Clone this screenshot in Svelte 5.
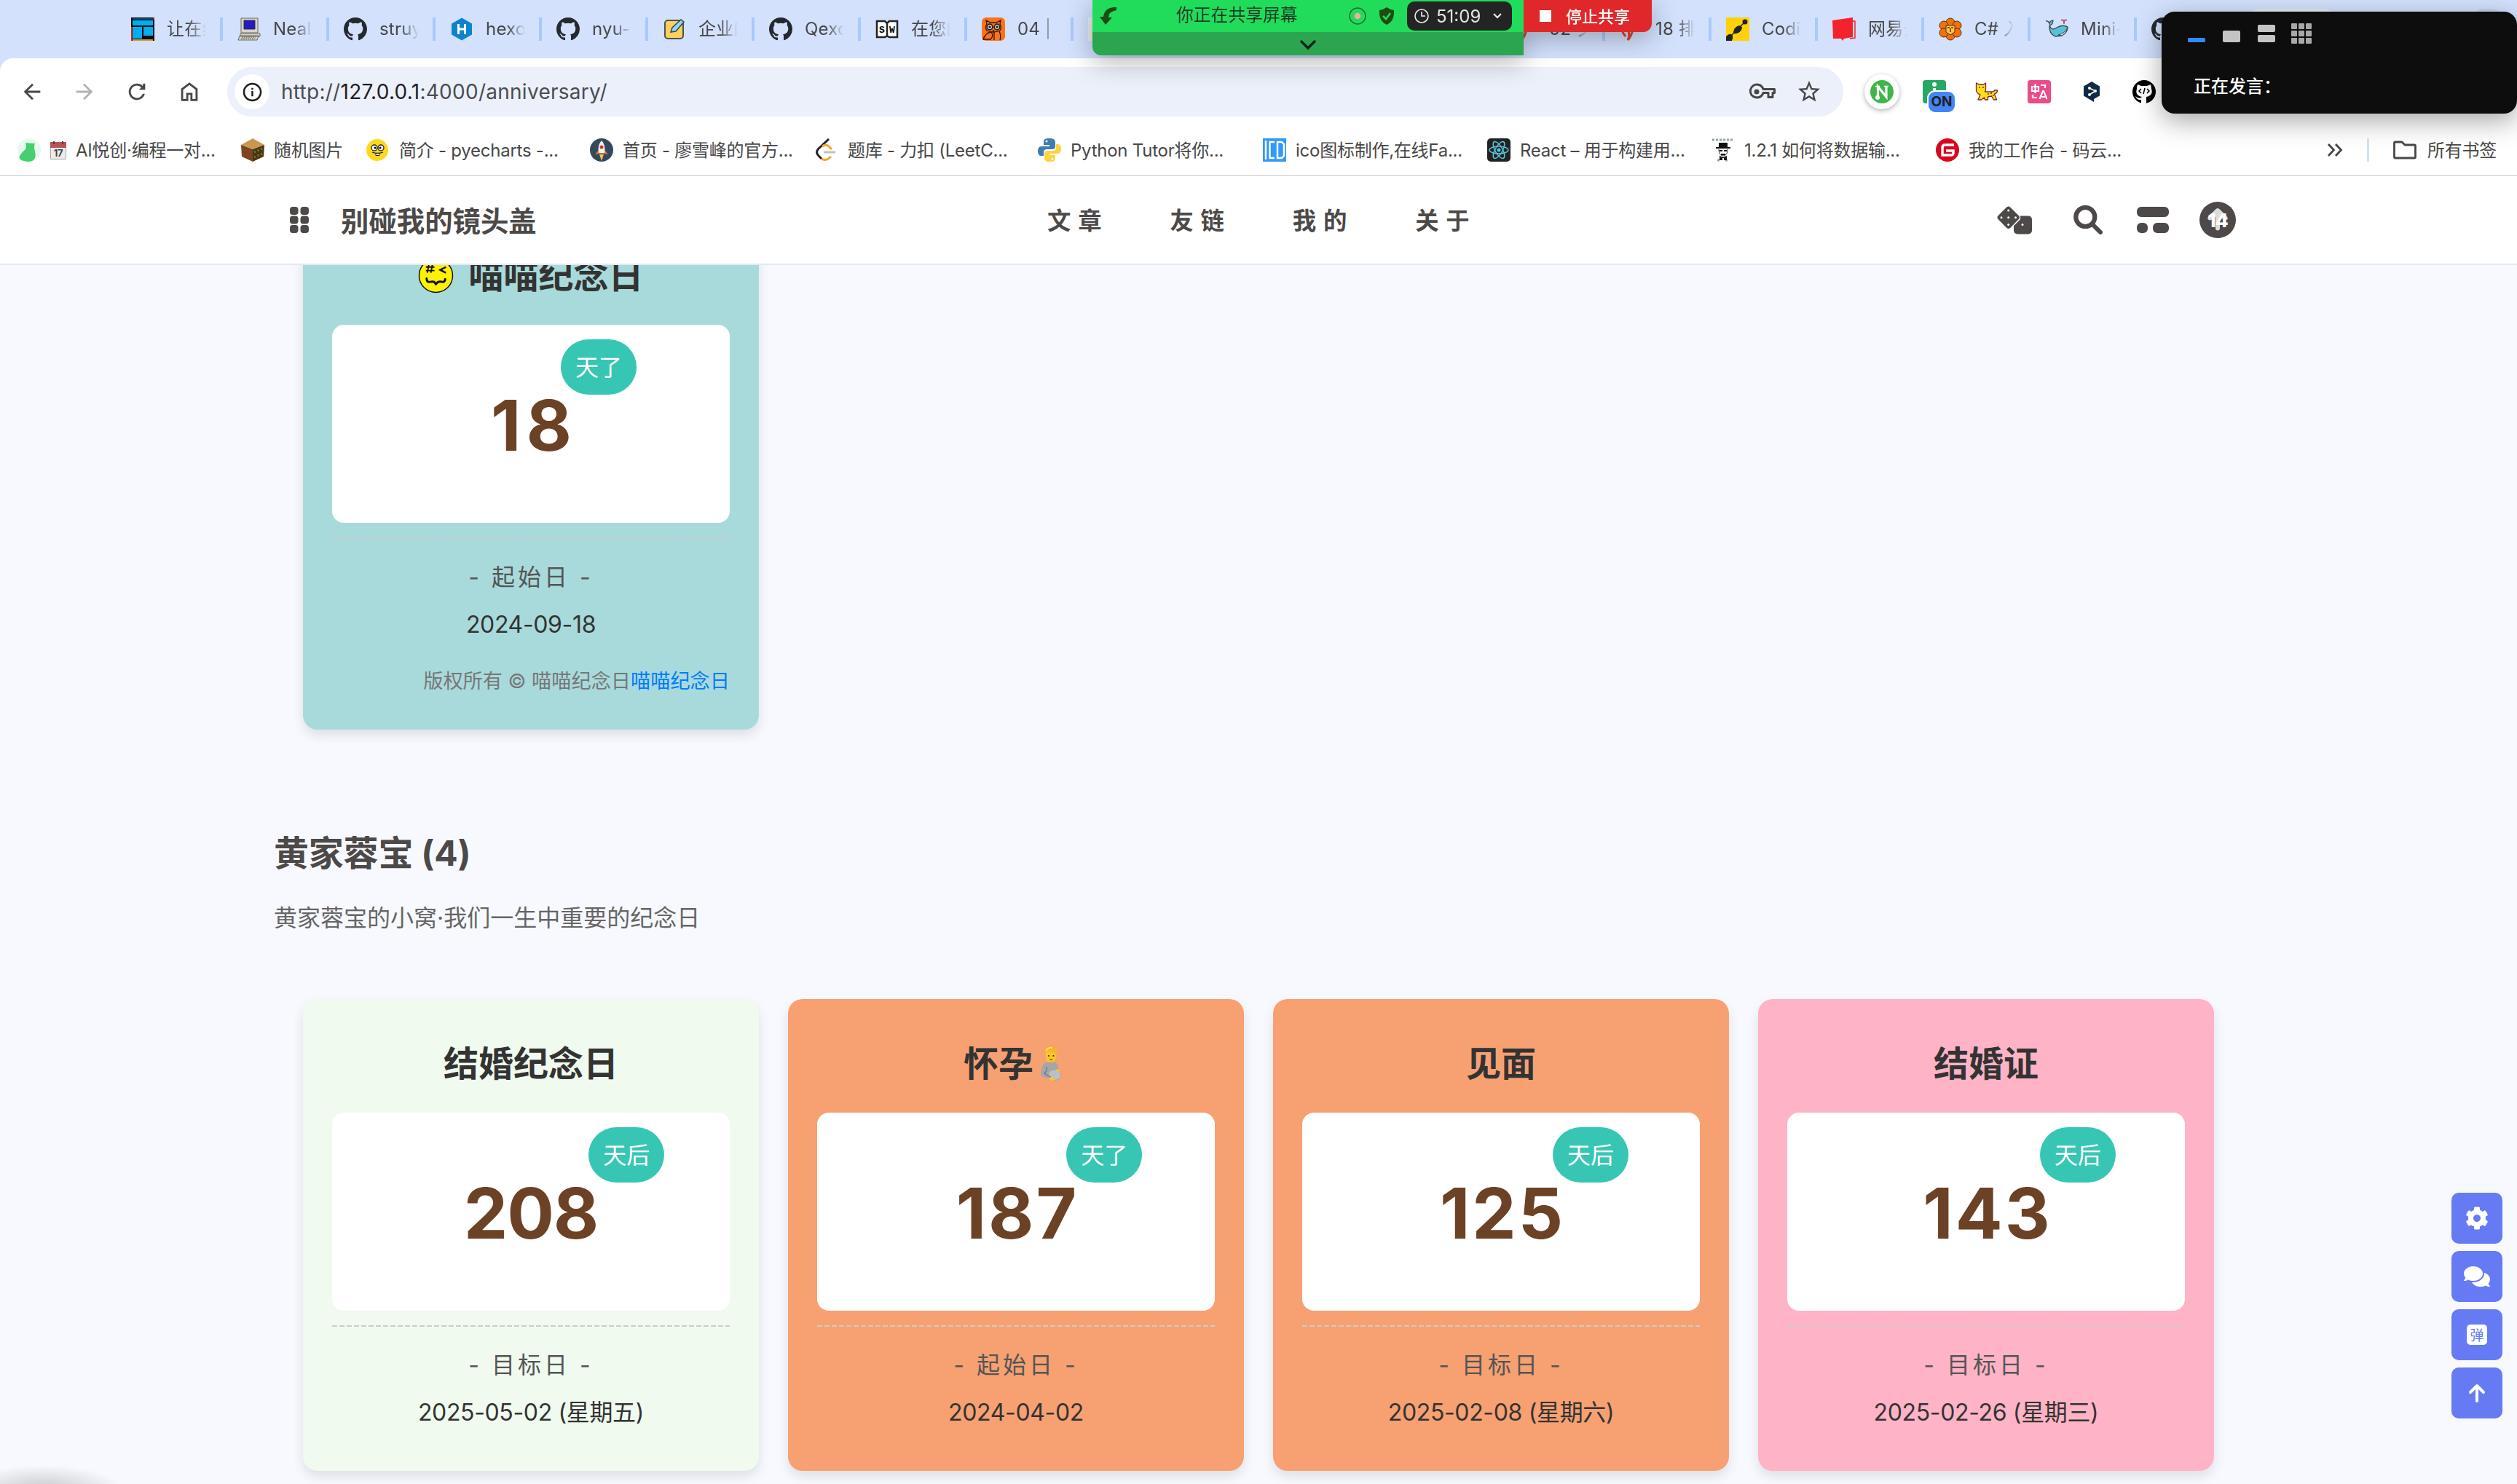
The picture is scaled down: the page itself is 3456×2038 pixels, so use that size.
<script>
  const tabs = [
    { icon: 'building', text: '让在线' },
    { icon: 'computer', text: 'Neal.' },
    { icon: 'github', text: 'struy' },
    { icon: 'hexo', text: 'hexo-' },
    { icon: 'github', text: 'nyu-' },
    { icon: 'note', text: '企业的' },
    { icon: 'github', text: 'Qexo' },
    { icon: 'book', text: '在您的' },
    { icon: 'owl', text: '04 | ' },
    { icon: 'blank', text: '' },
    { icon: 'none', text: '' },
    { icon: 'none', text: '' },
    { icon: 'none', text: '' },
    { icon: 'flame', text: '02 夕' },
    { icon: 'flame', text: '18 排序' },
    { icon: 'coding', text: 'Codin' },
    { icon: 'cube', text: '网易云' },
    { icon: 'lion', text: 'C# 入' },
    { icon: 'whale', text: 'Mini-' },
    { icon: 'github', text: '' }
  ];

  const bookmarks = [
    { icon: 'bird', text: 'AI悦创·编程一对...', calendar: true },
    { icon: 'shelf', text: '随机图片' },
    { icon: 'smile', text: '简介 - pyecharts -...' },
    { icon: 'rocket', text: '首页 - 廖雪峰的官方...' },
    { icon: 'leet', text: '题库 - 力扣 (LeetC...' },
    { icon: 'python', text: 'Python Tutor将你...' },
    { icon: 'ico', text: 'ico图标制作,在线Fa...' },
    { icon: 'react', text: 'React – 用于构建用...' },
    { icon: 'hat', text: '1.2.1 如何将数据输...' },
    { icon: 'gitee', text: '我的工作台 - 码云...' }
  ];

  const menu = ['文章', '友链', '我的', '关于'];

  const cards = [
    { title: '结婚纪念日', days: '208', unit: '天后', label: '- 目标日 -', date: '2025-05-02 (星期五)', tone: 'mint' },
    { title: '怀孕', days: '187', unit: '天了', label: '- 起始日 -', date: '2024-04-02', tone: 'orange', emoji: true, track: 'wide' },
    { title: '见面', days: '125', unit: '天后', label: '- 目标日 -', date: '2025-02-08 (星期六)', tone: 'orange', track: 'wide' },
    { title: '结婚证', days: '143', unit: '天后', label: '- 目标日 -', date: '2025-02-26 (星期三)', tone: 'pink', track: 'wide' }
  ];
</script>

{#snippet icon(name)}
  <svg class="ico" viewBox="0 0 32 32">
    {#if name === 'github'}
      <path transform="scale(2)" fill="#24292f" d="M8 0C3.58 0 0 3.58 0 8c0 3.54 2.29 6.53 5.47 7.59.4.07.55-.17.55-.38 0-.19-.01-.82-.01-1.49-2.01.37-2.53-.49-2.69-.94-.09-.23-.48-.94-.82-1.13-.28-.15-.68-.52-.01-.53.63-.01 1.08.58 1.23.82.72 1.21 1.87.87 2.33.66.07-.52.28-.87.51-1.07-1.78-.2-3.64-.89-3.64-3.95 0-.87.31-1.59.82-2.15-.08-.2-.36-1.02.08-2.12 0 0 .67-.21 2.2.82.64-.18 1.32-.27 2-.27s1.36.09 2 .27c1.53-1.04 2.2-.82 2.2-.82.44 1.1.16 1.92.08 2.12.51.56.82 1.27.82 2.15 0 3.07-1.87 3.75-3.65 3.95.29.25.54.73.54 1.48 0 1.07-.01 1.93-.01 2.2 0 .21.15.46.55.38A8.01 8.01 0 0 0 16 8c0-4.42-3.58-8-8-8z" />
    {:else if name === 'building'}
      <rect width="32" height="32" fill="#0a0a0a" />
      <path fill="#0b4a7d" d="M2 1h28v2H2z" /><path fill="#00aeef" d="M2 4h28v7H2zM2 13h13v16H2zM17 13h13v12H17z" />
      <path fill="#e02020" d="M0 13h1.500v19H0zM30.500 0H32v3h-1.500z" /><path fill="#d8962c" d="M2 30h28v2H2z" />
    {:else if name === 'computer'}
      <path fill="#d8d5c8" stroke="#6b6a63" d="M5 1h23v20H5zM4 22h27v4H4zM3 25h26l-2 6H1z" />
      <path fill="#2418c8" stroke="#333" d="M9 4h15v12H9z" /><path stroke="#555" stroke-dasharray="2 1" d="M6 27h19M5 29h19" />
    {:else if name === 'hexo'}
      <path fill="#0e83cd" d="M16 .5 30 8.500v15L16 31.500 2 23.500v-15z" /><path stroke="#fff" stroke-width="3" fill="none" d="M11.500 9v14M20.500 9v14M11.500 16h9" />
    {:else if name === 'note'}
      <rect x="3" y="4" width="25" height="25" rx="4" fill="#ffcf5c" stroke="#4a5258" stroke-width="2" />
      <path fill="#8ed8f5" stroke="#2d4a5a" stroke-width="1.500" d="m11 20 2-6L25 3l4 3-11 13z" />
    {:else if name === 'book'}
      <path fill="#fff" stroke="#222" stroke-width="2.500" d="M2 5h11l3 3 3-3h11v22H19l-3-1.500L13 27H2zM16 8v18" />
      <text x="9" y="21" class="mono">S</text><text x="23" y="21" class="mono">W</text>
    {:else if name === 'owl'}
      <rect width="32" height="32" rx="6" fill="#f9731a" />
      <g fill="none" stroke="#3a1404" stroke-width="1.300"><path d="M6 4l1 5q-3 5 0 9 9 4 18 0 3-4 0-9l1-5-6 3h-8zM13 20q-8 1-11 10h10q5-5 1-10M24 19q3 6 1 12M17 20v11" /></g>
      <g fill="#f2ead8" stroke="#222" stroke-width="1.800"><circle cx="11" cy="13" r="3.800" /><circle cx="21" cy="13" r="3.800" /></g>
      <circle cx="11" cy="13" r="1.800" fill="#222" /><circle cx="21" cy="13" r="1.800" fill="#222" /><path d="m14.500 17 1.500 3 1.500-3z" fill="#222" />
    {:else if name === 'blank'}
      <rect width="32" height="32" fill="#eceeee" />
    {:else if name === 'flame'}
      <path fill="none" stroke="#e2452c" stroke-width="3" d="M16 4Q0 13 5 22l3 4M12 2q6 10 5 18-2 7-6 11 3-6 1-12" />
    {:else if name === 'coding'}
      <rect width="32" height="32" fill="#ffd108" /><path d="M0 32v-6q4-4 7-3 4 2 1 9zM10 22q0-9 8-11 6 1 3 6-3 6-11 5z" fill="#222" /><circle cx="26" cy="6" r="3.500" fill="#222" /><path d="m24 8-6 6M12 20l-6 6" stroke="#222" stroke-width="1.500" />
    {:else if name === 'cube'}
      <path fill="#f5222d" d="M0 4 28 0v27l-12 2-2 3-2-3H1z" /><path fill="none" stroke="#f5222d" stroke-width="1.500" d="M28 5h3v23l-7 1" />
    {:else if name === 'lion'}
      <g fill="#f0720a" stroke="#5a3010"><circle cx="16" cy="7" r="6" /><circle cx="16" cy="25" r="6" /><circle cx="7" cy="11" r="6" /><circle cx="25" cy="11" r="6" /><circle cx="7" cy="21" r="6" /><circle cx="25" cy="21" r="6" /></g>
      <path fill="#ffc44a" stroke="#5a3010" d="M10 11h12v9l-6 4-6-4z" /><path d="M12 14h3M17 14h3M16 15v5" stroke="#5a3010" stroke-width="1.500" />
    {:else if name === 'whale'}
      <path fill="#52c4d8" stroke="#40434f" stroke-width="1.300" d="M6 11q3 8 10 3 8-5 15-1 0 8-8 12l-9 1Q5 22 6 11z" /><path fill="#52c4d8" stroke="#40434f" stroke-width="1.200" d="M1 5q4-1 6 6 4-2 4-7-3 0-5 3Q4 4 1 5z" /><path fill="#e8f4f6" stroke="#40434f" d="M31 13q-1 8-8 12l-5-1q10-2 13-11z" /><path fill="none" stroke="#b04050" stroke-width="1.500" d="M26 9V5M22 4q3-2 4 2 1-4 4-2" />
    {:else if name === 'bird'}
      <circle cx="16" cy="16" r="16" fill="#e6faec" /><path fill="#46cf70" d="M11 6q8 1 13 1-2 5 0 11 3 13-8 14Q0 31 3 24q4-6 8-9 2-5 0-9z" />
    {:else if name === 'shelf'}
      <path fill="#c9974f" d="m0 9 16-9 16 9-16 6z" /><path fill="#73481f" d="m0 9 16 6v17L1 25z" /><path fill="#553113" d="m32 9-16 6v17l15-7z" />
      <path stroke="#b53022" stroke-width="3" stroke-dasharray="2 2" d="m3 14 11 5M3 21l11 5" /><path stroke="#4d8a3a" stroke-width="3" stroke-dasharray="2 3" d="m18 19 11-5M18 26l11-5" />
    {:else if name === 'smile'}
      <circle cx="15" cy="16" r="15" fill="#fcd91c" /><circle cx="11" cy="13" r="4" fill="#fff" stroke="#222" stroke-width="1.300" /><circle cx="20" cy="13" r="4" fill="#fff" stroke="#222" stroke-width="1.300" /><circle cx="12" cy="13" r="1.500" /><circle cx="19" cy="13" r="1.500" /><path d="M8 19q7 3 15 0" fill="none" stroke="#222" stroke-width="1.300" /><path d="M13 20.500h5v3h-5z" fill="#fff" stroke="#222" />
    {:else if name === 'rocket'}
      <circle cx="16" cy="16" r="16" fill="#34495e" /><path fill="#e8743b" d="m7 22 5-6h8l5 6-6-1h-6z" /><path fill="#f2f2ea" d="M16 3q6 6 4 17h-8Q10 9 16 3z" /><circle cx="16" cy="12" r="2.500" fill="#c0392b" /><path fill="#f6c744" d="m13 22 3 9 3-9z" />
    {:else if name === 'leet'}
      <path fill="none" stroke="#222" stroke-width="3" d="M19 1 5 14q-5 5 0 10l4 4" /><path fill="none" stroke="#f5a52a" stroke-width="3" d="m10 11q5-4 9 0l4 4M9 28q6 4 13-3" /><path stroke="#c0c0c0" stroke-width="3" d="M12 19h16" />
    {:else if name === 'python'}
      <path fill="#3e7cb1" d="M16 0c-8 0-8 2-8 7v2h8v2H5c-7 0-6 13-1 13h4v-4c0-4 2-5 5-5h7c4 0 4-3 4-4V6c0-4-2-6-8-6z" /><circle cx="12" cy="4" r="1.500" fill="#fff" /><path fill="#ffd242" d="M16 32c8 0 8-2 8-7v-2h-8v-2h11c7 0 6-13 1-13h-3v4c0 4-2 5-5 5h-7c-4 0-4 3-4 4v5c0 4 2 6 7 6z" /><circle cx="20" cy="28" r="1.500" fill="#fff" />
    {:else if name === 'ico'}
      <rect width="32" height="32" fill="#3398fb" /><path fill="none" stroke="#fff" stroke-width="2.500" d="M4 3v26M16 5H9.500v22H16M20 5h6l3 3v16l-3 3h-6z" />
    {:else if name === 'react'}
      <rect width="32" height="32" rx="5" fill="#222" /><g fill="none" stroke="#58c4dc" stroke-width="1.500"><ellipse cx="16" cy="16" rx="13" ry="5" /><ellipse cx="16" cy="16" rx="13" ry="5" transform="rotate(60 16 16)" /><ellipse cx="16" cy="16" rx="13" ry="5" transform="rotate(120 16 16)" /></g><circle cx="16" cy="16" r="2.500" fill="#58c4dc" />
    {:else if name === 'hat'}
      <path stroke="#8aa8a0" stroke-width="3" stroke-dasharray="3 2" d="M1 2h30M8 30h5M19 30h5" /><path fill="#111" d="M10 6h12v6h4v2H6v-2h4zM11 24l5 2 5-2v6h-4v-3h-2v3h-4z" /><path fill="none" stroke="#333" d="M10 15q0 9 6 9t6-9" /><path stroke="#111" stroke-width="2" d="M11 17h4M17 17h4M13 22h6" />
    {:else if name === 'gitee'}
      <circle cx="16" cy="16" r="16" fill="#d8081c" /><path fill="none" stroke="#fff" stroke-width="3.500" d="M25 9H13q-4 0-4 4v10h12q3 0 3-3v-3H14" />
    {/if}
  </svg>
{/snippet}

{#snippet card(c)}
  <article class="card {c.tone}">
    <h3>
      {#if c.face}
        <svg class="face" viewBox="0 0 50 50"><circle cx="25" cy="25" r="23.500" fill="#fff200" stroke="#111" stroke-width="1.500" /><path fill="none" stroke="#111" stroke-width="2" d="m15 10-2 11M20 10l-2 11M11 13h12M11 18h12" /><path fill="none" stroke="#111" stroke-width="2.500" d="m39 13-8 4 8 4" /><path fill="none" stroke="#111" stroke-width="3" stroke-linecap="round" d="M12 29q0 5 4 5 5-1 7 0l2 3 3-3q2-1 7 0 3-1 3-4" /></svg>
      {/if}
      {c.title}{#if c.emoji}<svg class="mom" viewBox="0 0 48 48"><path fill="#fac52e" d="M16.500 9q0 13.500 7.500 13.500T31.500 9q-1-5-7.500-5t-7.500 5z" /><path fill="#f6b42a" d="M15.500 11Q14 0 24 0t8.500 11l-1.500 3q0-6-3-6-8 1-10-2-1 3-1 8z" /><path fill="none" stroke="#fde37a" stroke-width="1.500" d="M17 6q3-5 9-4" /><circle cx="21" cy="13" r="1.100" fill="#4a2a10" /><circle cx="27.500" cy="13" r="1.100" fill="#4a2a10" /><path fill="none" stroke="#8a3a18" stroke-width="1.300" d="M22.500 18q2 1 3.500 0" /><path fill="#f0a92a" d="M21 21h7v5h-7z" /><path fill="#a3a6ab" d="M20 21.500q4 3 9 0 4 1 5 7l1 4q4 5 2 10-3 5-9 5-5-1-8-4-6 0-10-5 0-4 1-6 1-10 9-11z" /><path fill="#bcbfc4" d="M22 35q8-5 14 0 3 5-1 9-6 4-11 0-4-5-2-9z" /><path fill="none" stroke="#74777d" stroke-width="1.300" d="M18 28q1 6-3 9 3 3 9 5" /><path fill="#fac52e" d="M24 42q6 2 6 4-4 3-9-1zM31 32q5-2 5 2l-4 1z" /></svg>{/if}
    </h3>
    <div class="count">
      <div class="days {c.track ?? ''}">{c.days}<span class="unit">{c.unit}</span></div>
    </div>
    <div class="rule"></div>
    <p class="label">{c.label}</p>
    <p class="date">{c.date}</p>
    {#if c.face}
      <p class="copy">版权所有 © 喵喵纪念日<a href="#top">喵喵纪念日</a></p>
    {/if}
  </article>
{/snippet}

<div class="screen">
  <div class="tabstrip">
    {#each tabs as t}
      <div class="tab">{@render icon(t.icon)}<span>{t.text}</span></div>
    {/each}
  </div>

  <div class="toolbar">
    <div class="navbtns">
      <svg viewBox="0 0 24 24"><path d="M20 11H7.830l5.590-5.590L12 4l-8 8 8 8 1.410-1.410L7.830 13H20v-2z" /></svg>
      <svg class="off" viewBox="0 0 24 24"><path d="M4 11h12.170l-5.590-5.590L12 4l8 8-8 8-1.410-1.410L16.170 13H4v-2z" /></svg>
      <svg viewBox="0 0 24 24"><path d="M17.650 6.350A7.950 7.950 0 0 0 12 4a8 8 0 1 0 7.730 10h-2.080A6 6 0 1 1 12 6c1.660 0 3.140.69 4.220 1.780L14 10h6V4h-2z" /></svg>
      <svg viewBox="0 0 24 24"><path d="M6 19h3v-6h6v6h3v-9l-6-4.500L6 10zm-2 2V9l8-6 8 6v12h-7v-6h-2v6z" /></svg>
    </div>
    <div class="omnibox">
      <div class="info"><svg viewBox="0 0 28 28"><circle cx="14" cy="14" r="12" fill="none" stroke="#1f1f1f" stroke-width="2.500" /><path d="M12.700 12.500h2.600V20h-2.600zM12.700 8h2.600v2.600h-2.600z" fill="#1f1f1f" /></svg></div>
      <span class="url">http://<b>127.0.0.1</b>:4000/anniversary/</span>
      <svg class="key" viewBox="0 0 36 24"><path fill="none" stroke="#474747" stroke-width="3" stroke-linejoin="round" d="M19 8.500h15.500v5H32v6h-6v-6h-7A9 9 0 1 1 19 8.500z" /><circle cx="10" cy="12" r="3.500" fill="#474747" /></svg>
      <svg class="star" viewBox="0 0 24 24"><path fill="#474747" d="M22 9.240l-7.190-.62L12 2 9.190 8.630 2 9.240l5.460 4.730L5.820 21 12 17.270 18.180 21l-1.630-7.030L22 9.240zM12 15.400l-3.760 2.270 1-4.280-3.320-2.880 4.380-.38L12 6.100l1.710 4.040 4.380.38-3.320 2.880 1 4.280L12 15.400z" /></svg>
    </div>
    <div class="exts">
      <div class="ext round"><svg viewBox="0 0 32 32"><circle cx="16" cy="16" r="16" fill="#3fb54a" /><path fill="none" stroke="#fff" stroke-width="3.200" d="M10.500 24V9l11.500 14V9" /><path stroke="#fff" stroke-width="1.500" d="M7 8.500h6M19 8.500h6" /><circle cx="10" cy="24" r="3" fill="#fff" /></svg></div>
      <div class="ext"><svg viewBox="0 0 32 32"><rect width="32" height="32" rx="4" fill="#27a863" /><circle cx="16" cy="6" r="3" fill="#fff" /><path stroke="#fff" stroke-width="4" d="M16 11v18" /></svg><span class="on">ON</span></div>
      <div class="ext"><svg viewBox="0 0 32 32"><path fill="#ffe010" stroke="#742247" stroke-width="1.300" stroke-linejoin="round" d="M1.500 4l4 2h6l3-2v9l-1 3h9q4 0 4-2h4q0 4-4 5l3 8h-4l-3-5-5 1v4h-4l-1-3-4 3H4l3-7q-6-2-5.500-8z" /><g fill="#742247"><circle cx="6" cy="10" r="1" /><circle cx="11" cy="10" r="1" /><circle cx="18" cy="19" r="1" /><circle cx="22" cy="18" r="1" /><circle cx="25" cy="21" r="1" /></g></svg></div>
      <div class="ext"><svg viewBox="0 0 32 32"><rect width="32" height="32" rx="4" fill="#ea4c89" /><path fill="none" stroke="#fff" stroke-width="2.200" d="M6 9h9v6H6zM10.500 5.500V18M18 7h6v4M7 20v4h6M16.500 26l4.500-11h1l4.500 11M18 23h7" /></svg></div>
      <div class="ext"><svg viewBox="0 0 32 32"><path fill="#0f2b46" d="M16 2l11 6.500v13L19 26v4l-5-3-9-5.500v-13z" /><path stroke="#fff" fill="none" stroke-width="1.500" d="m13 11 8 4-8 5" /><g fill="#fff"><circle cx="13" cy="11" r="2" /><circle cx="21" cy="15" r="2" /><circle cx="13" cy="20" r="2" /></g></svg></div>
      <div class="ext"><svg viewBox="0 0 32 32"><circle cx="16" cy="16" r="16" /><path fill="#fff" d="M7 6l5 2h8l5-2q1 3 1 6 3 9-7 11v9h-7v-5q-6 1-8-5 4 4 8 2l1-1q-10-2-7-11 0-3 1-6z" /><path fill="none" stroke="#000" stroke-width="1.500" d="m12 12-3 3 3 3M20 12l3 3-3 3M17 11l-2 8" /></svg></div>
    </div>
  </div>

  <div class="bookmarks">
    <div class="marks">
      {#each bookmarks as b}
        <div class="mark">
          {@render icon(b.icon)}
          {#if b.calendar}
            <svg class="cal" viewBox="0 0 22 26"><path fill="#ececec" stroke="#a5a5a5" d="M.5 3.500h21v22H.5z" /><path fill="#b95355" d="M0 2h22v8H0z" /><path d="M5 1v4M17 1v4" stroke="#444" stroke-width="2" /><text x="11" y="22" class="calnum">17</text></svg>
          {/if}
          <span>{b.text}</span>
        </div>
      {/each}
    </div>
    <svg class="more" viewBox="0 0 22 20"><path fill="none" stroke="#474747" stroke-width="2.800" d="m2 2 7.500 8L2 18M12 2l7.500 8L12 18" /></svg>
    <i class="sep"></i>
    <svg class="folder" viewBox="0 0 32 26"><path fill="none" stroke="#474747" stroke-width="2.800" stroke-linejoin="round" d="M3 2h9l4 4h13q1.500 0 1.500 1.500v15Q30.500 24 29 24H3q-1.500 0-1.500-1.500v-19Q1.500 2 3 2z" /></svg>
    <span>所有书签</span>
  </div>

  <header class="site">
    <svg class="dots" viewBox="0 0 26 36"><rect width="11.500" height="11" rx="4" /><rect x="14.500" width="11.500" height="11" rx="4" /><rect y="12.500" width="11.500" height="11" rx="4" /><rect x="14.500" y="12.500" width="11.500" height="11" rx="4" /><rect y="25" width="11.500" height="11" rx="4" /><rect x="14.500" y="25" width="11.500" height="11" rx="4" /></svg>
    <span class="brand">别碰我的镜头盖</span>
    <nav>{#each menu as m}<span>{m}</span>{/each}</nav>
    <div class="tools">
      <svg class="dice" viewBox="0 0 50 40"><rect x="24" y="14.500" width="25" height="25" rx="5" fill="#4c4948" /><rect x="4.200" y="4.200" width="25" height="25" rx="4.500" fill="#4c4948" stroke="#fff" stroke-width="1.500" transform="rotate(45 16.700 16.700)" /><g fill="#fff"><circle cx="16.700" cy="7" r="1.500" /><circle cx="7" cy="16.700" r="1.500" /><circle cx="16.700" cy="16.700" r="1.500" /><circle cx="26.500" cy="16.700" r="1.500" /><circle cx="16.700" cy="26.500" r="1.500" /><circle cx="36" cy="26.500" r="1.500" /></g></svg>
      <svg class="search" viewBox="0 0 40 40"><circle cx="16.300" cy="16" r="13" fill="none" stroke="#4c4948" stroke-width="6.200" /><path stroke="#4c4948" stroke-width="6" stroke-linecap="round" d="m26 26 11 11" /></svg>
      <svg class="layout" viewBox="0 0 44 36"><g fill="#4c4948"><rect width="44" height="14" rx="6" /><rect y="22" width="15" height="14" rx="6" /><rect x="22" y="22" width="22" height="14" rx="6" /></g></svg>
      <div class="progress"><svg viewBox="0 0 50 50"><path fill="#dcdcdc" d="M25 9q1.500 0 3 1.500l9 9q3 3 1 5t-5 0l-5-4v16q0 3-3 3t-3-3v-16l-5 4q-3 2-5 0t1-5l9-9Q23.500 9 25 9z" /></svg><span>14</span></div>
    </div>
  </header>

  <main>
    <div class="row first">
      {@render card({ title: '喵喵纪念日', days: '18', unit: '天了', label: '- 起始日 -', date: '2024-09-18', tone: 'teal', face: true, track: 'wider' })}
    </div>
    <h2>黄家蓉宝 (4)</h2>
    <p class="desc">黄家蓉宝的小窝·我们一生中重要的纪念日</p>
    <div class="row">
      {#each cards as c}{@render card(c)}{/each}
    </div>
  </main>

  <div class="side">
    <button aria-label="设置"><svg width="32" height="32" viewBox="0 0 512 512"><path fill="#fff" d="M487.400 315.700l-42.600-24.600c4.300-23.200 4.300-47 0-70.200l42.600-24.600c4.900-2.800 7.100-8.600 5.500-14-11.100-35.600-30-67.800-54.700-94.600-3.800-4.100-10-5.100-14.800-2.300L380.800 110c-17.900-15.400-38.500-27.300-60.800-35.100V25.800c0-5.600-3.900-10.500-9.400-11.700-36.700-8.200-74.300-7.800-109.200 0-5.500 1.200-9.400 6.100-9.400 11.700V75c-22.200 7.900-42.800 19.800-60.800 35.100L88.700 85.500c-4.900-2.800-11-1.900-14.800 2.300-24.700 26.700-43.600 58.900-54.700 94.600-1.700 5.400.6 11.200 5.500 14L67.300 221c-4.300 23.200-4.300 47 0 70.200l-42.600 24.600c-4.900 2.800-7.100 8.600-5.500 14 11.100 35.600 30 67.800 54.700 94.600 3.800 4.100 10 5.100 14.800 2.300l42.600-24.600c17.900 15.400 38.500 27.300 60.800 35.100v49.200c0 5.600 3.900 10.500 9.400 11.700 36.700 8.200 74.300 7.800 109.200 0 5.500-1.200 9.400-6.100 9.400-11.700v-49.200c22.200-7.900 42.800-19.800 60.800-35.100l42.600 24.600c4.900 2.800 11 1.900 14.800-2.300 24.700-26.700 43.600-58.900 54.700-94.600 1.500-5.500-.7-11.300-5.600-14.100zM256 336c-44.100 0-80-35.900-80-80s35.900-80 80-80 80 35.900 80 80-35.900 80-80 80z" /></svg></button>
    <button aria-label="评论"><svg width="36" height="32" viewBox="0 0 576 512"><path fill="#fff" d="M416 192c0-88.400-93.100-160-208-160S0 103.600 0 192c0 34.300 14.100 65.900 38 92-13.400 30.200-35.500 54.200-35.800 54.500-2.200 2.300-2.800 5.700-1.500 8.700S4.800 352 8 352c36.600 0 66.900-12.300 88.700-25 32.200 15.700 70.300 25 111.300 25 114.900 0 208-71.600 208-160zm122 220c23.900-26 38-57.700 38-92 0-66.900-53.500-124.200-129.300-148.100.9 6.600 1.300 13.300 1.300 20.100 0 105.900-107.700 192-240 192-10.800 0-21.300-.8-31.700-1.900C207.800 439.600 281.800 480 368 480c41 0 79.100-9.200 111.300-25 21.800 12.700 52.100 25 88.700 25 3.200 0 6.100-1.900 7.300-4.800 1.300-2.900.7-6.300-1.500-8.700-.3-.3-22.400-24.200-35.800-54.500z" /></svg></button>
    <button aria-label="弹幕"><span class="dan">弹</span></button>
    <button aria-label="回到顶部"><svg width="24" height="28" viewBox="0 0 24 28"><path fill="none" stroke="#fff" stroke-width="4" stroke-linecap="round" stroke-linejoin="round" d="M12 25V4M3 13l9-9 9 9" /></svg></button>
  </div>

  <div class="corner"></div>

  <div class="share">
    <div class="green">
      <div class="line">
        <svg class="arrow" viewBox="0 0 24 24"><path fill="#1d4d12" d="M23 0Q7-1 5 13H0l8 11 9-10h-5Q12 6 23 4z" /></svg>
        <span class="msg">你正在共享屏幕</span>
        <svg class="rec" viewBox="0 0 24 24"><circle cx="12" cy="12" r="11" fill="none" stroke="#17702b" stroke-width="1.500" /><circle cx="12" cy="12" r="4.300" fill="#f4a9a8" /></svg>
        <svg class="shield" viewBox="0 0 22 24"><path fill="#1d4d12" d="M11 0q4 3 10 4 1 15-10 20Q0 19 1 4q6-1 10-4z" /><path fill="none" stroke="#21db5a" stroke-width="2.500" d="m6 12 4 4 6-8" /></svg>
        <div class="timer">
          <svg class="clock" viewBox="0 0 20 20"><circle cx="10" cy="10" r="9" fill="none" stroke="#eee" stroke-width="1.600" /><path fill="none" stroke="#eee" stroke-width="1.600" d="M10 4v6h5" /></svg>
          <span>51:09</span>
          <svg class="chev" viewBox="0 0 12 8"><path fill="none" stroke="#eee" stroke-width="2" d="m1 1 5 5 5-5" /></svg>
        </div>
      </div>
      <div class="under"><svg viewBox="0 0 22 14"><path fill="none" stroke="#14241a" stroke-width="3.500" stroke-linecap="round" d="m2 2 9 9 9-9" /></svg></div>
    </div>
    <div class="red"><i></i><span>停止共享</span></div>
  </div>

  <div class="peek"></div>
  <div class="peek two"></div>
  <div class="speaker">
    <svg viewBox="0 0 172 30"><rect x="0" y="21" width="24" height="6" rx="1.500" fill="#2d8cff" /><g fill="#c4c4c4"><rect x="48" y="11" width="24" height="16" rx="2" /><rect x="96" y="3" width="24" height="10" rx="2" /><rect x="96" y="17" width="24" height="10" rx="2" /></g><g fill="#a8a8a8">{#each [0, 1, 2] as r}{#each [0, 1, 2] as q}<rect x={142 + q * 10} y={1 + r * 10} width="8" height="8" rx="1" />{/each}{/each}</g></svg>
    <span>正在发言：</span>
  </div>
</div>

<style>
  :global(body) { margin: 0; overflow: hidden; }
  .screen { position: relative; width: 3456px; height: 2038px; overflow: hidden; display: flex; flex-direction: column; background: #d3e1fd; font-family: Inter, "Noto Sans CJK SC", sans-serif; color: #474747; }
  .screen * { box-sizing: border-box; }
  svg { display: block; flex: none; }
  p, h2, h3 { margin: 0; }
  .ico { width: 32px; height: 32px; }
  .mono { font: 700 13px "Liberation Mono", monospace; text-anchor: middle; }

  .tabstrip { height: 80px; flex: none; display: flex; padding-left: 160px; overflow: hidden; }
  .tab { width: 146px; height: 32px; margin-top: 24px; padding-left: 20px; flex: none; display: flex; align-items: center; gap: 17px; border-right: 4px solid #a9c9fd; font-size: 24px; letter-spacing: .2px; }
  .tab span { width: 54px; overflow: hidden; white-space: nowrap; line-height: 32px; mask-image: linear-gradient(90deg, #000 55%, transparent); }

  .toolbar { height: 80px; flex: none; display: flex; align-items: center; padding: 12px 0 0 27px; background: #fff; border-radius: 18px 0 0 0; }
  .navbtns { display: flex; gap: 38px; width: 285px; flex: none; fill: #474747; }
  .navbtns svg { width: 34px; height: 34px; }
  .off { fill: #b3b3b3; }
  .omnibox { width: 2219px; height: 68px; border-radius: 34px; background: #ecf0fa; display: flex; align-items: center; padding: 0 30px 0 10px; }
  .info { width: 48px; height: 48px; border-radius: 50%; background: #fff; display: grid; place-items: center; }
  .info svg { width: 27px; height: 27px; }
  .url { flex: 1; margin-left: 16px; font-size: 28px; letter-spacing: .27px; color: #4a4c50; }
  .url b { font-weight: 400; color: #1f1f1f; }
  .key { width: 36px; height: 24px; margin-right: 28px; }
  .star { width: 36px; height: 36px; margin-right: -1px; }
  .exts { display: flex; margin-left: 29px; gap: 24px; }
  .ext { position: relative; width: 48px; height: 48px; display: grid; place-items: center; border-radius: 50%; flex: none; }
  .ext svg { width: 32px; height: 32px; }
  .round { background: #fff; box-shadow: 0 2px 6px rgba(0, 0, 0, .3); }
  .on { position: absolute; left: 14px; top: 22px; border: 2px solid #fff; width: 40px; height: 32px; border-radius: 11px; background: #4285f4; color: #202124; font: 700 19px/28px Inter, sans-serif; text-align: center; }

  .bookmarks { height: 82px; flex: none; display: flex; align-items: center; padding: 12px 0 0 24px; background: #fff; border-bottom: 2px solid #e0e0e0; font-size: 24px; letter-spacing: -.25px; }
  .bookmarks span { padding-bottom: 3px; }
  .marks { width: 3171px; display: grid; grid-template-columns: 307px 172px 307px 309px 306px 309px 308px 308px 308px auto; }
  .mark { display: flex; align-items: center; gap: 13px; white-space: nowrap; }
  .cal { width: 22px; height: 26px; }
  .calnum { font: 700 13px Inter, sans-serif; text-anchor: middle; fill: #444; }
  .more { width: 22px; height: 20px; }
  .sep { width: 3px; height: 32px; margin: 0 33px 0 33px; background: #d3e1fd; }
  .folder { width: 32px; height: 26px; margin-right: 15px; }

  .site { height: 122px; flex: none; display: flex; align-items: center; background: #fff; border-bottom: 2px solid #e3e8f7; color: #4c4948; padding-left: 398px; }
  .dots { width: 26px; height: 36px; fill: #4c4948; }
  .brand { width: 970px; margin-left: 44px; font-size: 38.400px; font-weight: 700; padding-bottom: 3px; }
  nav { display: flex; width: 1303px; gap: 84px; font-size: 32.400px; font-weight: 700; padding-bottom: 3px; }
  nav span { letter-spacing: 9.800px; }
  .tools { display: flex; align-items: center; }
  .dice { width: 50px; height: 40px; margin-right: 56px; }
  .search { width: 40px; height: 40px; margin-right: 47px; }
  .layout { width: 44px; height: 36px; margin-right: 42px; }
  .progress { width: 50px; height: 50px; border-radius: 50%; background: #4c4948; display: grid; place-items: center; }
  .progress > * { grid-area: 1 / 1; }
  .progress span { z-index: 1; color: #fff; font: 800 26px Inter, sans-serif; letter-spacing: -1px; }

  main { flex: 1; min-height: 0; overflow: hidden; background: #f7f9fe; padding: 0 376px; }
  .row { display: flex; gap: 40px; padding-left: 40px; }
  .row.first { margin-top: -74px; }
  .card { width: 626px; flex: none; padding: 40px 40px 34px; border-radius: 20px; box-shadow: 0 8px 16px rgba(0, 0, 0, .1); text-align: center; color: #333; height: 648px; }
  .teal { background: #a8dadb; height: 712px; }
  .mint { background: #f0faef; }
  .orange { background: #f7a072; }
  .pink { background: #ffb3c6; }
  h3 { height: 96px; display: flex; justify-content: center; align-items: center; font-size: 48px; font-weight: 700; line-height: 96px; padding-top: 1px; }
  .face { width: 49px; height: 49px; margin-right: 20px; }
  .mom { width: 48px; height: 48px; }
  .count { height: 272px; margin-top: 20px; border-radius: 16px; background: #fff; padding-top: 80px; }
  .days { position: relative; width: fit-content; margin: 0 auto; font-size: 96px; font-weight: 700; line-height: 116px; letter-spacing: -1px; color: #6b4226; }
  .wide { letter-spacing: 3px; padding-left: 4px; }
  .wider { letter-spacing: 7px; padding-left: 8px; }
  .unit { position: absolute; left: calc(100% - 13px); top: -60px; width: 104px; height: 76px; border-radius: 40px; background: #38c6b4; color: #fff; font-size: 32px; font-weight: 400; line-height: 77px; letter-spacing: 0; }
  .wide .unit { left: calc(100% - 17px); }
  .wider .unit { left: calc(100% - 22px); }
  .rule { height: 2px; margin-top: 20px; background: repeating-linear-gradient(90deg, #ccc 0 7px, transparent 7px 10px); }
  .label { margin-top: 21px; font-size: 32px; line-height: 64px; letter-spacing: 4px; color: #555; }
  .date { font-size: 32px; line-height: 66px; letter-spacing: -.35px; }
  .copy { margin-top: 20px; text-align: right; font-size: 27.200px; line-height: 50px; color: #777; }
  .copy a { color: #007bff; text-decoration: none; }
  h2 { margin-top: 135px; font-size: 48px; line-height: 70px; font-weight: 700; letter-spacing: -.2px; color: #4c4948; }
  .desc { margin: 29px 0 86px; font-size: 32px; line-height: 50px; color: #666; }

  .side { position: absolute; left: 3366px; top: 1638px; display: flex; flex-direction: column; gap: 10px; }
  .side button { width: 70px; height: 70px; border: 0; padding: 0; border-radius: 10px; background: #667bf3; display: grid; place-items: center; }
  .dan { width: 28px; height: 28px; border-radius: 5px; background: #fff; color: #667bf3; font: 19px/27px "Noto Sans CJK SC", sans-serif; text-align: center; }
  .corner { position: absolute; left: -50px; top: 2012px; width: 220px; height: 70px; background: radial-gradient(closest-side, rgba(0, 0, 0, .2), transparent); }

  .share { position: absolute; left: 1500px; top: 0; display: flex; align-items: flex-start; filter: drop-shadow(0 8px 18px rgba(0, 0, 0, .3)); }
  .green { width: 592px; border-radius: 0 0 0 12px; overflow: hidden; background: #2ba54f; }
  .line { height: 44px; background: #21db5a; display: flex; align-items: center; padding-left: 10px; }
  .arrow { width: 24px; height: 24px; }
  .msg { width: 237px; margin-left: 81px; font-size: 23.800px; line-height: 40px; margin-bottom: 3px; color: #1b3a26; }
  .rec { width: 24px; height: 24px; margin-right: 17px; }
  .shield { width: 22px; height: 24px; margin-right: 17px; }
  .timer { width: 144px; height: 40px; border-radius: 10px; background: #242424; display: flex; align-items: center; padding-left: 10px; color: #e4e4e4; font-size: 24px; }
  .timer span { width: 78px; margin-left: 10px; }
  .clock { width: 20px; height: 20px; }
  .chev { width: 12px; height: 8px; }
  .under { height: 32px; display: grid; place-items: center; }
  .under svg { width: 22px; height: 14px; margin-top: 3px; }
  .red { width: 176px; height: 44px; border-radius: 0 0 12px 0; background: #e0282a; color: #fff; display: flex; align-items: center; padding-left: 22px; gap: 20px; font-size: 22px; font-weight: 500; }
  .red i { width: 16px; height: 16px; background: #fff; }
  .red span { padding-bottom: 2px; }

  .peek { position: absolute; left: 3088px; top: 12px; width: 116px; height: 30px; border-radius: 14px; background: #e6ebf3; }
  .peek.two { left: 3396px; width: 40px; background: #c5d3ec; }
  .speaker { position: absolute; left: 2968px; top: 16px; width: 488px; height: 140px; border-radius: 18px; background: #0d0d0d; padding: 15px 0 0 36px; box-shadow: 0 10px 36px rgba(0, 0, 0, .35); }
  .speaker svg { width: 172px; height: 30px; }
  .speaker span { display: block; margin: 40px 0 0 8px; color: #fff; font-size: 24px; line-height: 36px; font-weight: 500; }
</style>
